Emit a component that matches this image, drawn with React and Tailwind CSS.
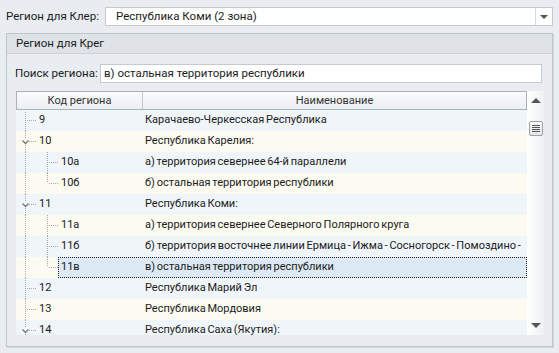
import React from "react";

const rows = [
  { code: "9", name: "Карачаево-Черкесская Республика", level: 0, kind: "leaf" },
  { code: "10", name: "Республика Карелия:", level: 0, kind: "open" },
  { code: "10а", name: "а) территория севернее 64-й параллели", level: 1, kind: "mid" },
  { code: "10б", name: "б) остальная территория республики", level: 1, kind: "last" },
  { code: "11", name: "Республика Коми:", level: 0, kind: "open" },
  { code: "11а", name: "а) территория севернее Северного Полярного круга", level: 1, kind: "mid" },
  { code: "11б", name: "б) территория восточнее линии Ермица - Ижма - Сосногорск - Помоздино -", level: 1, kind: "mid" },
  { code: "11в", name: "в) остальная территория республики", level: 1, kind: "last", selected: true },
  { code: "12", name: "Республика Марий Эл", level: 0, kind: "leaf" },
  { code: "13", name: "Республика Мордовия", level: 0, kind: "leaf" },
  { code: "14", name: "Республика Саха (Якутия):", level: 0, kind: "open" },
];

function TreeLines({ row, first }) {
  const dots = "#a8a8a8";
  return (
    <svg width="45" height="21" className="shrink-0" shapeRendering="crispEdges">
      {row.kind === "open" ? (
        <>
          <line x1="9.5" y1={first ? 2 : 0} x2="9.5" y2="8" stroke={dots} strokeDasharray="1 1" />
          <line x1="9.5" y1="14" x2="9.5" y2="21" stroke={dots} strokeDasharray="1 1" />
          <path d="M6.5 9.5 L9.5 12.5 L12.5 9.5" fill="none" stroke="#7a7a7a" strokeWidth="1.4" shapeRendering="auto" />
          <line x1="13" y1="10.5" x2="20" y2="10.5" stroke={dots} strokeDasharray="1 1" />
        </>
      ) : (
        <>
          <line x1="9.5" y1={first ? 2 : 0} x2="9.5" y2="21" stroke={dots} strokeDasharray="1 1" />
          {row.level === 0 && <line x1="11" y1="10.5" x2="20" y2="10.5" stroke={dots} strokeDasharray="1 1" />}
        </>
      )}
      {row.level === 1 && (
        <>
          <line x1="31.5" y1="0" x2="31.5" y2={row.kind === "last" ? 10 : 21} stroke={dots} strokeDasharray="1 1" />
          <line x1="33" y1="10.5" x2="42" y2="10.5" stroke={dots} strokeDasharray="1 1" />
        </>
      )}
    </svg>
  );
}

function Row({ r, odd, first }) {
  return (
    <div className={`h-[21px] shrink-0 flex ${odd ? "bg-[#fbfbf2]" : "bg-[#f0f5fa]"}`}>
      <div className="w-[127px] flex items-center">
        <TreeLines row={r} first={first} />
        <span className={r.level === 0 ? "-ml-[22px]" : ""}>{r.code}</span>
      </div>
      <div className="flex-1 flex items-center pl-[2px] whitespace-nowrap overflow-hidden">{r.name}</div>
    </div>
  );
}

export default function App() {
  return (
    <div
      className="w-[559px] h-[353px] overflow-hidden bg-[#e9edf1] text-[11.5px] text-[#1b1b1b] whitespace-nowrap"
      style={{ fontFamily: 'Roboto, "Liberation Sans", sans-serif' }}
    >
      <div className="flex items-center pt-[7px] pl-[6px] pr-[6px] h-[26px]">
        <div className="w-[99px] leading-none">Регион для Клер:</div>
        <div className="flex-1 h-[19px] flex bg-white border border-[#c4cad0]">
          <div className="flex-1 pl-[10px] flex items-center leading-none">Республика Коми (2 зона)</div>
          <div className="w-[17px] border-l border-[#d3d8dd] flex items-center justify-center">
            <span className="w-0 h-0 border-l-[4px] border-r-[4px] border-t-[4px] border-l-transparent border-r-transparent border-t-[#555]" />
          </div>
        </div>
      </div>

      <div className="mt-[7px] mx-[6px] h-[314px] border border-[#bfc5cc] shadow-[1px_1px_0_#d0d5da] flex flex-col">
        <div className="h-[20px] shrink-0 bg-[#dfe3e8] border-b border-[#cdd2d8] flex items-center pl-[9px] leading-none">
          Регион для Крег
        </div>
        <div className="flex shrink-0 items-center mt-[10px] pl-[8px] pr-[10px]">
          <div className="w-[85px] leading-none">Поиск региона:</div>
          <div className="flex-1 h-[19px] bg-white border border-[#c4cad0] flex items-center pl-[3px] leading-none">
            в) остальная территория республики
          </div>
        </div>

        <div className="mt-[8px] ml-[9px] mr-[8px] h-[244px] shrink-0 flex bg-white overflow-hidden text-[11px] [word-spacing:-1px]">
          <div className="w-[511px] flex flex-col overflow-hidden">
            <div className="h-[19px] shrink-0 flex border border-[#a9b1b9] bg-gradient-to-b from-[#f9fafb] to-[#eceff2] text-[#333] [word-spacing:0px]">
              <div className="w-[126px] border-r border-[#c3c9cf] flex items-center justify-center leading-none">Код региона</div>
              <div className="flex-1 flex items-center justify-center leading-none">Наименование</div>
            </div>
            {rows.slice(0, 7).map((r, i) => (
              <Row key={r.code} r={r} odd={i % 2 === 1} first={i === 0} />
            ))}
            <div className="h-[21px] shrink-0 flex bg-[#fbfbf2]">
              <div className="w-[42px] shrink-0 overflow-hidden">
                <TreeLines row={rows[7]} />
              </div>
              <div className="flex-1 flex bg-[#dde9f5] outline-1 outline-dotted outline-[#222] -outline-offset-1">
                <div className="w-[85px] flex items-center pl-[3px]">11в</div>
                <div className="flex-1 flex items-center pl-[2px]">в) остальная территория республики</div>
              </div>
            </div>
            {rows.slice(8).map((r, i) => (
              <Row key={r.code} r={r} odd={i % 2 === 1} />
            ))}
          </div>
          <div className="w-[17px] shrink-0 bg-gradient-to-r from-[#ffffff] to-[#eef0f2] flex flex-col items-center">
            <span className="mt-[7px] w-0 h-0 border-l-[5px] border-r-[5px] border-b-[5px] border-l-transparent border-r-transparent border-b-[#555]" />
            <div className="mt-[18px] w-[14px] h-[15px] rounded-[2px] border border-[#9aa0a6] bg-gradient-to-b from-[#fbfbfb] to-[#e4e6e8] flex flex-col items-center justify-center gap-[1px]">
              <span className="w-[8px] h-px bg-[#555]" />
              <span className="w-[8px] h-px bg-[#555]" />
              <span className="w-[8px] h-px bg-[#555]" />
              <span className="w-[8px] h-px bg-[#555]" />
            </div>
            <div className="flex-1" />
            <span className="mb-[7px] w-0 h-0 border-l-[5px] border-r-[5px] border-t-[5px] border-l-transparent border-r-transparent border-t-[#555]" />
          </div>
        </div>
      </div>
    </div>
  );
}
